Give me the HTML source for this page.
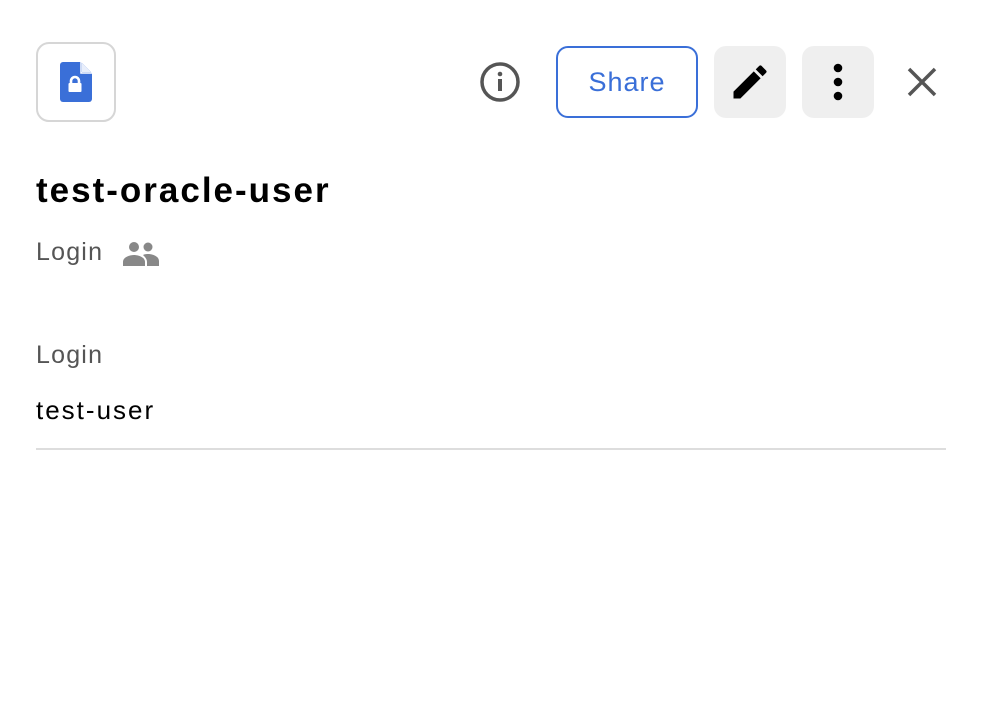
<!DOCTYPE html>
<html><head><style>
body{margin:0;width:984px;height:724px;background:#fff;font-family:"Liberation Sans",sans-serif;position:relative;overflow:hidden}
.abs{position:absolute}
</style></head><body>
<div class="abs" style="left:36px;top:42px;width:80px;height:80px;border:2px solid #d6d6d6;border-radius:13px;box-sizing:border-box"></div>
<svg class="abs" style="left:60px;top:62px" width="32" height="40" viewBox="0 0 32 40"><path d="M3 0H21L32 11V37a3 3 0 0 1-3 3H3a3 3 0 0 1-3-3V3a3 3 0 0 1 3-3z" fill="#3a6fd8"/><path d="M22 1L31 10H22z" fill="#e8eefb"/><path d="M21 0V11H32" fill="none" stroke="#fff" stroke-width="1.5"/><rect x="8.5" y="21" width="13" height="9" rx="1" fill="#fff"/><path d="M11 22v-3a4 4 0 0 1 8 0v3" stroke="#fff" stroke-width="2.6" fill="none"/></svg>
<svg class="abs" style="left:479px;top:61px" width="42" height="42" viewBox="0 0 42 42"><circle cx="21" cy="21" r="18" stroke="#555" stroke-width="3.5" fill="none"/><rect x="19" y="18" width="4" height="12" fill="#555"/><circle cx="21" cy="13" r="2.3" fill="#555"/></svg>
<div class="abs" style="left:556px;top:46px;width:142px;height:72px;border:2px solid #3a6fd8;border-radius:12px;box-sizing:border-box;color:#3a6fd8;font-size:27px;letter-spacing:1px;text-align:center;line-height:68px">Share</div>
<div class="abs" style="left:714px;top:46px;width:72px;height:72px;background:#efefef;border-radius:12px"></div>
<svg class="abs" style="left:728px;top:60px" width="44" height="44" viewBox="0 0 24 24"><path d="M3 17.25V21h3.75L17.81 9.94l-3.75-3.75L3 17.25zM20.71 7.04a1 1 0 0 0 0-1.41l-2.34-2.34a1 1 0 0 0-1.41 0l-1.83 1.83 3.75 3.75 1.83-1.83z" fill="#000"/></svg>
<div class="abs" style="left:802px;top:46px;width:72px;height:72px;background:#efefef;border-radius:12px"></div>
<svg class="abs" style="left:826px;top:62px" width="24" height="40"><circle cx="12" cy="6" r="4.3" fill="#000"/><circle cx="12" cy="20" r="4.3" fill="#000"/><circle cx="12" cy="34" r="4.3" fill="#000"/></svg>
<svg class="abs" style="left:906px;top:66px" width="32" height="32"><path d="M3 3L29 29M29 3L3 29" stroke="#555" stroke-width="3.5"/></svg>
<div class="abs" style="left:36px;top:171px;font-size:35px;font-weight:bold;letter-spacing:2px;color:#000">test-oracle-user</div>
<div class="abs" style="left:36px;top:238px;font-size:25px;letter-spacing:1.2px;color:#555">Login</div>
<svg class="abs" style="left:123px;top:241px" width="36" height="26" viewBox="0 0 36 26"><circle cx="11" cy="6" r="5" fill="#888"/><circle cx="25" cy="6" r="4.5" fill="#888"/><path d="M0 25v-4c0-5 7-7 11-7s11 2 11 7v4z" fill="#888"/><path d="M20 14c2-1 4-1 5-1 4 0 11 2 11 7v5H24v-4c0-3-2-5-4-7z" fill="#888"/></svg>
<div class="abs" style="left:36px;top:341px;font-size:25px;letter-spacing:1.2px;color:#555">Login</div>
<div class="abs" style="left:36px;top:395px;font-size:26px;letter-spacing:2px;color:#000">test-user</div>
<div class="abs" style="left:36px;top:448px;width:910px;height:2px;background:#ddd"></div>
</body></html>
